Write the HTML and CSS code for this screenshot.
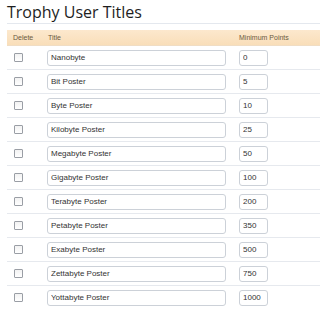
FILE: index.html
```html
<!DOCTYPE html>
<html>
<head>
<meta charset="utf-8">
<link rel="stylesheet" href="styles.css">
</head>
<body>
<div class="page">
  <h1 class="title">Trophy User Titles</h1>
  <div class="table">
    <div class="head">
      <div class="c-del">Delete</div>
      <div class="c-title">Title</div>
      <div class="c-pts">Minimum Points</div>
    </div>
    <div class="row"><div class="c-del"><input type="checkbox" class="chk"></div><div class="c-title"><input class="txt t-title" value="Nanobyte"></div><div class="c-pts"><input class="txt t-pts" value="0"></div></div>
    <div class="row"><div class="c-del"><input type="checkbox" class="chk"></div><div class="c-title"><input class="txt t-title" value="Bit Poster"></div><div class="c-pts"><input class="txt t-pts" value="5"></div></div>
    <div class="row"><div class="c-del"><input type="checkbox" class="chk"></div><div class="c-title"><input class="txt t-title" value="Byte Poster"></div><div class="c-pts"><input class="txt t-pts" value="10"></div></div>
    <div class="row"><div class="c-del"><input type="checkbox" class="chk"></div><div class="c-title"><input class="txt t-title" value="Kilobyte Poster"></div><div class="c-pts"><input class="txt t-pts" value="25"></div></div>
    <div class="row"><div class="c-del"><input type="checkbox" class="chk"></div><div class="c-title"><input class="txt t-title" value="Megabyte Poster"></div><div class="c-pts"><input class="txt t-pts" value="50"></div></div>
    <div class="row"><div class="c-del"><input type="checkbox" class="chk"></div><div class="c-title"><input class="txt t-title" value="Gigabyte Poster"></div><div class="c-pts"><input class="txt t-pts" value="100"></div></div>
    <div class="row"><div class="c-del"><input type="checkbox" class="chk"></div><div class="c-title"><input class="txt t-title" value="Terabyte Poster"></div><div class="c-pts"><input class="txt t-pts" value="200"></div></div>
    <div class="row"><div class="c-del"><input type="checkbox" class="chk"></div><div class="c-title"><input class="txt t-title" value="Petabyte Poster"></div><div class="c-pts"><input class="txt t-pts" value="350"></div></div>
    <div class="row"><div class="c-del"><input type="checkbox" class="chk"></div><div class="c-title"><input class="txt t-title" value="Exabyte Poster"></div><div class="c-pts"><input class="txt t-pts" value="500"></div></div>
    <div class="row"><div class="c-del"><input type="checkbox" class="chk"></div><div class="c-title"><input class="txt t-title" value="Zettabyte Poster"></div><div class="c-pts"><input class="txt t-pts" value="750"></div></div>
    <div class="row"><div class="c-del"><input type="checkbox" class="chk"></div><div class="c-title"><input class="txt t-title" value="Yottabyte Poster"></div><div class="c-pts"><input class="txt t-pts" value="1000"></div></div>
  </div>
</div>
</body>
</html>
```

FILE: styles.css
```css
html, body {
  margin: 0;
  padding: 0;
  background: #ffffff;
  overflow: hidden;
}
.page {
  padding-left: 7px;
  font-family: "Liberation Sans", Arial, sans-serif;
}
.title {
  margin: 0 0 6px 0;
  padding-top: 1px;
  height: 22px;
  line-height: 22px;
  font-family: "Open Sans", sans-serif;
  font-size: 16px;
  font-weight: normal;
  color: #1e1e1e;
  border-bottom: 1px solid #e4e8ee;
}
.table {
  display: flex;
  flex-direction: column;
}
.head, .row {
  display: grid;
  grid-template-columns: 40px 192px 1fr;
  align-items: center;
}
.head {
  height: 16px;
  background: linear-gradient(#fce8cd, #f9deb9);
  border-bottom: 1px solid #f0ddc4;
  box-sizing: border-box;
  font-size: 7px;
  color: #6b5a3f;
}
.head .c-del {
  padding-left: 6px;
}
.head .c-title {
  padding-left: 1px;
}
.row {
  height: 24px;
  box-sizing: border-box;
  border-bottom: 1px solid #e6e9ee;
}
.c-del {
  padding-left: 7px;
  display: flex;
  align-items: center;
}
.c-title, .c-pts {
  display: flex;
  align-items: center;
}
.chk {
  appearance: none;
  -webkit-appearance: none;
  margin: 0;
  width: 9px;
  height: 9px;
  border: 1px solid #9a9ea5;
  border-radius: 1px;
  background: linear-gradient(#f2f2f2, #ffffff);
  box-sizing: border-box;
}
.txt {
  margin: 0;
  height: 16px;
  box-sizing: border-box;
  border: 1px solid #ccd1d8;
  border-radius: 3px;
  background: #ffffff;
  padding: 0 3px;
  font-family: "Liberation Sans", Arial, sans-serif;
  font-size: 8px;
  color: #333333;
  outline: none;
}
.t-title {
  width: 179px;
}
.t-pts {
  width: 29px;
}
```
